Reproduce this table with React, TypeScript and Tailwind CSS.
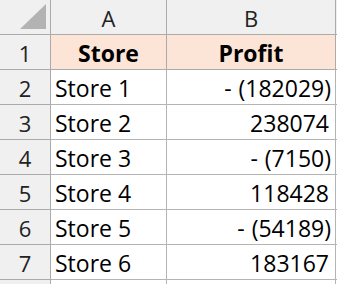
import React from "react";

const rows: [string, string, boolean][] = [
  ["Store 1", "- (182029)", true],
  ["Store 2", "238074", false],
  ["Store 3", "- (7150)", true],
  ["Store 4", "118428", false],
  ["Store 5", "- (54189)", true],
  ["Store 6", "183167", false],
];

const font = { fontFamily: '"Open Sans", "Noto Sans", sans-serif' };

export default function App() {
  return (
    <div className="w-[337px] h-[284px] overflow-hidden bg-white" style={font}>
      <div className="grid grid-cols-[51px_116px_169px_1px]">
        {/* header row */}
        <div className="h-[35px] bg-[#f0f0f0] border-r border-b border-[#ababab] relative">
          <svg className="absolute left-0 top-0" width="50" height="34" viewBox="0 0 50 34">
            <polygon points="20,29 46,29 46,4" fill="#b3b3b3" />
          </svg>
        </div>
        <div className="h-[35px] bg-[#f0f0f0] border-r border-b border-[#ababab] flex items-center justify-center pt-[2px] text-[22px] text-[#222]">
          A
        </div>
        <div className="h-[35px] bg-[#f0f0f0] border-r border-b border-[#ababab] flex items-center justify-center pt-[2px] text-[22px] text-[#222]">
          B
        </div>
        <div className="h-[35px] bg-[#f0f0f0] border-b border-[#ababab]" />

        {/* row 1 */}
        <div className="h-[35px] bg-[#f0f0f0] border-r border-b border-[#ababab] flex items-center justify-center pt-[2px] text-[22px] text-[#222]">
          1
        </div>
        <div className="h-[35px] bg-[#fce4d6] border-r border-b border-[#ababab] flex items-center justify-center pt-[2px] text-[23px] font-bold text-black">
          Store
        </div>
        <div className="h-[35px] bg-[#fce4d6] border-r border-b border-[#ababab] flex items-center justify-center pt-[2px] text-[23px] font-bold text-black">
          Profit
        </div>
        <div className="h-[35px] border-b border-[#ababab]" />

        {rows.map(([s, p, neg], i) => (
          <React.Fragment key={i}>
            <div className="h-[35px] bg-[#f0f0f0] border-r border-b border-[#ababab] flex items-center justify-center pt-[2px] text-[22px] text-[#222]">
              {i + 2}
            </div>
            <div className="h-[35px] border-r border-b border-[#b4b4b4] flex items-center pl-[4px] pt-[2px] text-[23px] text-black">
              {s}
            </div>
            <div
              className={
                neg
                  ? "h-[35px] border-r border-b border-[#b4b4b4] flex items-center justify-end pr-[4px] pt-[2px] text-[23px] text-black whitespace-pre [word-spacing:1px]"
                  : "h-[35px] border-r border-b border-[#b4b4b4] flex items-center justify-end pr-[6px] pt-[2px] text-[23px] text-black whitespace-pre"
              }
            >
              {p}
            </div>
            <div className="h-[35px] border-b border-[#b4b4b4]" />
          </React.Fragment>
        ))}

        <div className="h-[35px] bg-[#f0f0f0] border-r border-[#ababab]" />
        <div className="h-[35px] border-r border-[#b4b4b4]" />
        <div className="h-[35px] border-r border-[#b4b4b4]" />
        <div className="h-[35px]" />
      </div>
    </div>
  );
}
